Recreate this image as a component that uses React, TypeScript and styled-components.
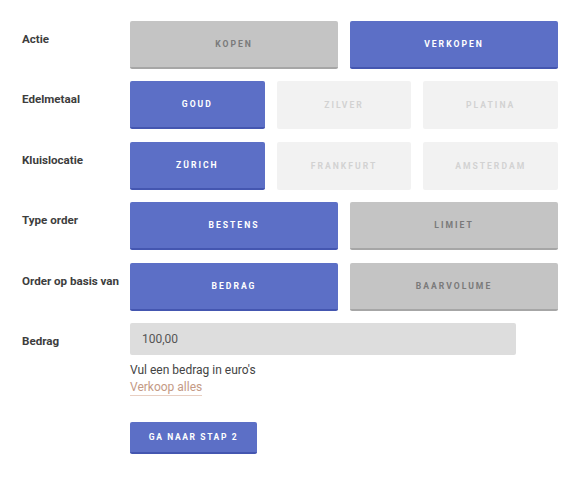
import React, { useState } from 'react';
import styled, { createGlobalStyle, css } from 'styled-components';

const GlobalStyle = createGlobalStyle`
    body {
        margin: 0;
        background: #ffffff;
        font-family: Roboto, 'Liberation Sans', sans-serif;
        color: #333333;
    }
`;

const Form = styled.form`
    display: flex;
    flex-direction: column;
    gap: 12.4px;
    padding: 21px 0 0 22px;
    width: 536px;
`;

const Row = styled.div`
    display: grid;
    grid-template-columns: 108px 428px;
    align-items: start;
`;

const Label = styled.div`
    font-size: 11.6px;
    font-weight: 700;
    line-height: 16px;
    color: #3d3d3d;
    padding-top: 10px;
    white-space: nowrap;
`;

type OptionsProps = {
    readonly count: number
}
const Options = styled.div<OptionsProps>`
    display: grid;
    grid-template-columns: repeat(${({ count }) => count}, 1fr);
    gap: 12px;
`;

type Variant = 'active' | 'idle' | 'disabled';

type OptionProps = {
    readonly variant: Variant
}
const Option = styled.button<OptionProps>`
    height: 48px;
    border: none;
    border-radius: 2px;
    font-family: Roboto, 'Liberation Sans', sans-serif;
    font-size: 8.6px;
    font-weight: 700;
    letter-spacing: 2px;
    text-transform: uppercase;
    padding: 0;
    cursor: pointer;
    ${({ variant }) => variant === 'active' && css`
        background: #5c6fc6;
        color: #ffffff;
        border-bottom: 2px solid #4456b0;
    `}
    ${({ variant }) => variant === 'idle' && css`
        background: #c4c4c4;
        color: #7a7a7a;
        border-bottom: 2px solid #a6a6a6;
    `}
    ${({ variant }) => variant === 'disabled' && css`
        background: #f2f2f2;
        color: #d2d2d2;
        cursor: default;
    `}
`;

const Field = styled.div`
    display: flex;
    flex-direction: column;
    align-items: flex-start;
`;

const AmountInput = styled.input`
    box-sizing: border-box;
    width: 386px;
    height: 32px;
    border: none;
    border-radius: 2px;
    background: #dddddd;
    padding: 0 12px;
    font-family: Roboto, 'Liberation Sans', sans-serif;
    font-size: 12px;
    color: #555555;
    outline: none;
`;

const Hint = styled.div`
    margin-top: 7px;
    font-size: 12px;
    line-height: 16px;
    color: #444444;
`;

const SellAll = styled.a`
    margin-top: 2px;
    font-size: 12px;
    line-height: 15px;
    color: #c49a85;
    text-decoration: none;
    border-bottom: 1px solid #e8cfc2;
    cursor: pointer;
`;

const NextButton = styled.button`
    margin-top: 26px;
    width: 127px;
    height: 32px;
    border: none;
    border-bottom: 2px solid #4456b0;
    border-radius: 2px;
    background: #5c6fc6;
    color: #ffffff;
    font-family: Roboto, 'Liberation Sans', sans-serif;
    font-size: 8.5px;
    font-weight: 700;
    letter-spacing: 1.6px;
    text-transform: uppercase;
    cursor: pointer;
`;

type Choice = {
    readonly label: string
    readonly options: string[]
    readonly disabled?: string[]
    readonly initial: string
}

const choices: Choice[] = [
    { label: 'Actie', options: ['Kopen', 'Verkopen'], initial: 'Verkopen' },
    { label: 'Edelmetaal', options: ['Goud', 'Zilver', 'Platina'], disabled: ['Zilver', 'Platina'], initial: 'Goud' },
    { label: 'Kluislocatie', options: ['Zürich', 'Frankfurt', 'Amsterdam'], disabled: ['Frankfurt', 'Amsterdam'], initial: 'Zürich' },
    { label: 'Type order', options: ['Bestens', 'Limiet'], initial: 'Bestens' },
    { label: 'Order op basis van', options: ['Bedrag', 'Baarvolume'], initial: 'Bedrag' },
];

const ChoiceRow = ({ choice }: { readonly choice: Choice }) => {
    const [selected, setSelected] = useState(choice.initial);
    return (
        <Row>
            <Label>{choice.label}</Label>
            <Options count={choice.options.length}>
                {choice.options.map(opt => {
                    const disabled = choice.disabled?.includes(opt);
                    const variant: Variant = disabled ? 'disabled' : opt === selected ? 'active' : 'idle';
                    return (
                        <Option
                            key={opt}
                            type='button'
                            variant={variant}
                            onClick={() => !disabled && setSelected(opt)}
                        >
                            {opt}
                        </Option>
                    );
                })}
            </Options>
        </Row>
    );
};

export default function App() {
    const [amount, setAmount] = useState('100,00');
    return (
        <>
            <GlobalStyle />
            <Form onSubmit={e => e.preventDefault()}>
                {choices.map(c => <ChoiceRow key={c.label} choice={c} />)}
                <Row>
                    <Label>Bedrag</Label>
                    <Field>
                        <AmountInput value={amount} onChange={e => setAmount(e.target.value)} />
                        <Hint>Vul een bedrag in euro's</Hint>
                        <SellAll>Verkoop alles</SellAll>
                        <NextButton type='submit'>Ga naar stap 2</NextButton>
                    </Field>
                </Row>
            </Form>
        </>
    );
}
